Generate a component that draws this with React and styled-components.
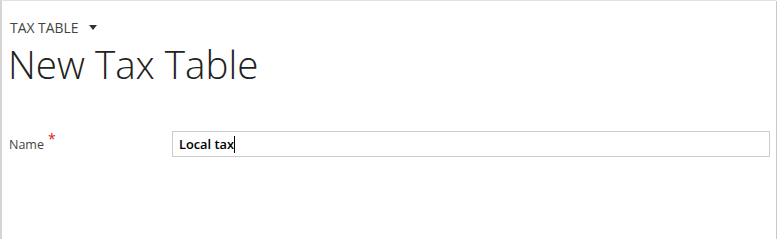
import React from 'react'
import styled, { createGlobalStyle } from 'styled-components'

const Global = createGlobalStyle`
  html, body { margin: 0; padding: 0; background: #ffffff; }
  body { font-family: "Open Sans", "Noto Sans", sans-serif; }
`

const Frame = styled.div`
  box-sizing: border-box;
  width: 776px;
  height: 239px;
  background: #fff;
  border-top: 1px solid #e2e2e2;
  border-left: 2px solid #d4d4d4;
  box-shadow: 1px 1px 0 #c8c8c8, 2px 2px 1px #a0a0a0;
  padding: 17px 0 0 8px;
`

const Breadcrumb = styled.div`
  display: flex;
  align-items: center;
  gap: 11px;
  font-size: 13.9px;
  color: #444;
  height: 18px;
`

const Caret = styled.span`
  width: 0;
  height: 0;
  border-left: 4px solid transparent;
  border-right: 4px solid transparent;
  border-top: 5px solid #333;
  margin-top: 1px;
`

const Title = styled.h1`
  margin: 5px 0 0 -2px;
  font-weight: 300;
  font-size: 38.6px;
  line-height: 46px;
  color: #222;
`

const FieldRow = styled.div`
  display: flex;
  align-items: center;
  margin-top: 44px;
`

const Label = styled.div`
  width: 163px;
  margin-left: -1px;
  font-size: 12.5px;
  color: #444;
  display: flex;
  align-items: flex-start;
`

const Required = styled.span`
  color: #e02020;
  font-size: 14px;
  margin-left: 4px;
  line-height: 10px;
  margin-top: -2px;
`

const InputBox = styled.div`
  box-sizing: border-box;
  width: 598px;
  height: 26px;
  border: 1px solid #cccccc;
  display: flex;
  align-items: center;
  padding-left: 6px;
  font-size: 12.8px;
  font-weight: 600;
  color: #000;
`

const Cursor = styled.span`
  display: inline-block;
  width: 1px;
  height: 17px;
  background: #000;
`

export default function App() {
  return (
    <>
      <Global />
      <Frame>
        <Breadcrumb>
          TAX TABLE <Caret />
        </Breadcrumb>
        <Title>New Tax Table</Title>
        <FieldRow>
          <Label>
            Name<Required>*</Required>
          </Label>
          <InputBox>
            Local tax<Cursor />
          </InputBox>
        </FieldRow>
      </Frame>
    </>
  )
}
